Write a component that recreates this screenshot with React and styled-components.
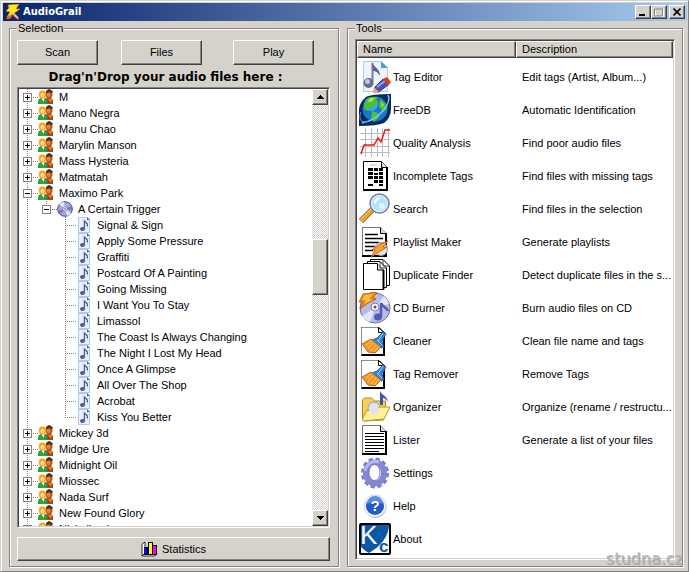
import React from "react";
import styled, { createGlobalStyle, css } from "styled-components";

const face = "#d5d2cb";
const shade = "#848284";
const dark = "#424142";

const GlobalStyle = createGlobalStyle`
  * { box-sizing: border-box; }
  body {
    margin: 0;
    overflow: hidden;
    background: ${face};
    color: #000;
    font: 11px/13px "Liberation Sans", Arial, sans-serif;
  }
  button { font: inherit; color: inherit; padding: 0; margin: 0; }
`;

const raised = css`
  border: 1px solid;
  border-color: #fff ${dark} ${dark} #fff;
  box-shadow: inset -1px -1px 0 ${shade};
  background: ${face};
`;

const sunken = css`
  border: 1px solid;
  border-color: ${shade} #fff #fff ${shade};
  box-shadow: inset 1px 1px 0 ${dark}, inset -1px -1px 0 ${face};
  padding: 1px;
  background: #fff;
`;

const Window = styled.main`
  position: relative;
  display: flex;
  flex-direction: column;
  height: 100vh;
  min-height: 320px;
  border: 1px solid;
  border-color: ${face} ${shade} ${shade} ${face};
  box-shadow: inset 1px 1px 0 #fff;
  padding: 2px 1px 0 2px;
  background: ${face};
`;

const TitleBar = styled.header`
  display: flex;
  align-items: center;
  flex: none;
  height: 18px;
  padding: 0 2px;
  background: linear-gradient(90deg, #0a246a, #a6caf0);
`;

const Title = styled.h1`
  flex: 1;
  margin: 0 0 0 2px;
  color: #fff;
  font: bold 11px/16px "DejaVu Sans Condensed", "DejaVu Sans", sans-serif;
`;

const CaptionButton = styled.button`
  ${raised}
  display: grid;
  place-items: center;
  width: 16px;
  height: 14px;
  margin-left: ${(p) => (p.$apart ? "2px" : "0")};
`;

const Body = styled.div`
  flex: 1;
  min-height: 0;
  display: grid;
  grid-template-columns: minmax(0, 330fr) minmax(0, 336fr);
  gap: 8px;
  padding: 1px 4px 4px 6px;
`;

const Group = styled.fieldset`
  display: flex;
  flex-direction: column;
  min-width: 0;
  min-height: 0;
  margin: 0;
  padding: ${(p) => p.$pad};
  border: 1px solid ${shade};
  box-shadow: 1px 1px 0 #fff, inset 1px 1px 0 #fff;
`;

const Legend = styled.legend`
  padding: 0 1px;
  background: ${face};
`;

const Toolbar = styled.div`
  display: grid;
  grid-template-columns: 104fr 112fr 97fr;
  flex: none;
`;

const PushButton = styled.button`
  ${raised}
  display: flex;
  align-items: center;
  justify-content: center;
  gap: 4px;
  flex: none;
  width: ${(p) => (p.$wide ? "100%" : "81px")};
  height: ${(p) => (p.$wide ? "24px" : "25px")};
`;

const DropHint = styled.p`
  flex: none;
  margin: 6px 16px 3px 0;
  text-align: center;
  white-space: nowrap;
  font: bold 12px/13px "DejaVu Sans", Verdana, sans-serif;
`;

const TreeBox = styled.div`
  ${sunken}
  display: flex;
  flex: 1;
  min-height: 0;
  margin-bottom: 9px;
  overflow: hidden;
`;

const TreeList = styled.ul`
  flex: 1;
  min-width: 0;
  margin: 0;
  padding: 0;
  overflow: hidden;
  list-style: none;
`;

const TreeRow = styled.li`
  display: flex;
  height: 16px;
`;

const dots = "repeating-linear-gradient";
const guides = {
  none: "none",
  line: `${dots}(180deg, ${shade} 0 1px, transparent 1px 2px) 8px 0 / 1px 16px no-repeat`,
  tee: `${dots}(180deg, ${shade} 0 1px, transparent 1px 2px) 8px 0 / 1px 16px no-repeat,
        ${dots}(90deg, ${shade} 0 1px, transparent 1px 2px) 8px 8px / 11px 1px no-repeat`,
  end: `${dots}(180deg, ${shade} 0 1px, transparent 1px 2px) 8px 0 / 1px 9px no-repeat,
        ${dots}(90deg, ${shade} 0 1px, transparent 1px 2px) 8px 8px / 11px 1px no-repeat`,
};

const Guide = styled.span`
  flex: none;
  width: 19px;
  height: 16px;
  padding: 4px;
  background: ${(p) => guides[p.$kind]};
`;

const Toggle = styled.button`
  display: block;
  width: 9px;
  height: 9px;
  border: 1px solid ${shade};
  background:
    linear-gradient(#000, #000) center / 5px 1px no-repeat,
    linear-gradient(#000, #000) center / 1px ${(p) => (p.$open ? "0" : "5px")} no-repeat,
    #fff;
`;

const TreeLabel = styled.span`
  padding: 0 2px 0 5px;
  line-height: 16px;
  white-space: nowrap;
`;

const ScrollBar = styled.div`
  display: flex;
  flex-direction: column;
  flex: none;
  width: 16px;
  background: repeating-conic-gradient(#fff 0 25%, ${face} 0 50%) 0 0 / 2px 2px;
`;

const ScrollButton = styled.button`
  ${raised}
  display: grid;
  place-items: center;
  flex: none;
  width: 16px;
  height: 16px;
`;

const ScrollTrack = styled.div`
  flex: 1;
  display: grid;
  grid-template-rows: 134fr 56fr 215fr;
`;

const ScrollThumb = styled.div`
  ${raised}
  grid-row: 2;
`;

const ListBox = styled.div`
  ${sunken}
  flex: 1;
  min-height: 0;
  overflow: hidden;
`;

const ToolTable = styled.table`
  width: 100%;
  table-layout: fixed;
  border-collapse: separate;
  border-spacing: 0;
`;

const HeadCell = styled.th`
  ${raised}
  width: ${(p) => p.$width};
  height: 17px;
  padding: 0 0 0 5px;
  text-align: left;
  font-weight: normal;
`;

const ToolCell = styled.td`
  height: 33px;
  padding: ${(p) => (p.$text ? "2px 0 0 6px" : "0 0 0 2px")};
  white-space: nowrap;
  overflow: hidden;
`;

const TableBody = styled.tbody`
  &::before {
    content: "";
    display: block;
    height: 2px;
  }
`;

const ToolName = styled.span`
  display: flex;
  align-items: center;
  gap: 2px;
`;

const ToolLabel = styled.span`
  padding-top: 2px;
`;

const Glyph = styled.svg`
  display: block;
  flex: none;
`;

const Watermark = styled.span`
  position: absolute;
  right: 5px;
  bottom: 2px;
  color: #bdbbb7;
  font: 16px/20px "DejaVu Sans", Verdana, sans-serif;
  text-shadow: 1px 1px 0 #a3a19e;
`;

/* ---------- small icons ---------- */

const AppIcon = () => (
  <Glyph width="16" height="16" viewBox="0 0 16 16" aria-hidden="true">
    <path d="M1 15l4-6 3 2-3 4zM9 9l5 5-1 2-5-4z" fill="#e0601c" />
    <path d="M3 1l11-1-3 5 4 0-7 5-6 3 3-5-4-1 3-3z" fill="#ffe81c" stroke="#d98f14" strokeWidth="0.7" />
    <path d="M8 9l5 5" stroke="#d5d5e4" strokeWidth="1.5" />
  </Glyph>
);

const People = () => (
  <Glyph width="16" height="16" viewBox="0 0 16 16" aria-hidden="true">
    <path d="M7 15V11q1-2 3-2h3q2 1 2 3v3z" fill="#a84410" />
    <path d="M10 10l3 4 1-4z" fill="#e88038" />
    <ellipse cx="11" cy="5.500" rx="3.500" ry="4" fill="#bd5614" />
    <ellipse cx="10.500" cy="6" rx="1.800" ry="2" fill="#e58a3c" />
    <path d="M8 3q0-2 3-3 3 1 4 3l-1 1q-3-1.500-6 0z" fill="#34382c" />
    <path d="M0 15v-3q1-3 3-3h4q2 0 2 3v3z" fill="#2fa03a" />
    <path d="M3.500 9h3L5.500 13z" fill="#fff" />
    <ellipse cx="4.500" cy="5.500" rx="3.700" ry="4" fill="#f2a21e" />
    <ellipse cx="4.500" cy="6" rx="2.200" ry="2.500" fill="#ffd479" />
  </Glyph>
);

const Disc = () => (
  <Glyph width="16" height="16" viewBox="0 0 16 16" aria-hidden="true">
    <circle cx="8" cy="8" r="7.3" fill="#a4a6dc" stroke="#454a86" />
    <path d="M8 8L2 3a7 7 0 0 1 5-2zM8 8l6 4a7 7 0 0 1-4 3z" fill="#e4e8fb" />
    <path d="M8 8l7-3v4zM8 8L1 10l2 3z" fill="#7672c0" />
    <circle cx="8" cy="8" r="2.2" fill="#fff" stroke="#6a6ea0" strokeWidth="0.7" />
    <circle cx="8" cy="8" r="0.8" fill="#333a66" />
  </Glyph>
);

const Song = () => (
  <Glyph width="16" height="16" viewBox="0 0 16 16" aria-hidden="true">
    <path d="M2.500 0.500H11L13.500 3V15.500h-11z" fill="#e9f1fb" stroke="#b5c9e6" />
    <path d="M11 0l3 3h-3z" fill="#2a75bd" />
    <ellipse cx="6.500" cy="12" rx="2.500" ry="2" fill="#50579c" />
    <path d="M8.400 12V4l3 3v2.500" fill="none" stroke="#50579c" strokeWidth="1.300" />
  </Glyph>
);

const Chart = () => (
  <Glyph width="17" height="16" viewBox="0 0 17 16" aria-hidden="true">
    <path d="M1 3l3-2v11l-3 3z" fill="#fff" stroke="#000" strokeWidth="0.8" />
    <path d="M1 15l3-3h12l-2 3z" fill="#fff" stroke="#000" strokeWidth="0.8" />
    <g shapeRendering="crispEdges">
      <path d="M3 6h4v8H3zM7 1h5v13H7zM11 4h5v10h-5z" fill="#000" />
      <path d="M3 7h3v6H3z" fill="#0000ff" />
      <path d="M8 2h3v11H8z" fill="#ffff00" />
      <path d="M12 5h3v8h-3z" fill="#ff00ff" />
    </g>
  </Glyph>
);

const Arrow = ({ down }) => (
  <Glyph width="7" height="4" viewBox="0 0 7 4" shapeRendering="crispEdges" aria-hidden="true">
    <path d={down ? "M0 0h7L3.500 4z" : "M0 4h7L3.500 0z"} />
  </Glyph>
);

/* ---------- tool icons ---------- */

const Page = ({ x = 3, stroke = "#000" }) => (
  <>
    <path d={`M${x + 0.5} 1.500H${x + 18.5}L${x + 24.5} 7.500V30.500H${x + 0.5}z`} fill="#fff" stroke={stroke} />
    <path d={`M${x + 18.5} 1.500V7.500H${x + 24.5}`} fill="#dcdcdc" stroke="#000" />
    <path d={`M${x + 24} 7V30H${x}`} fill="none" stroke="#000" strokeWidth="2" />
  </>
);

const Broom = () => (
  <>
    <path d="M2.500 2.500H20L25.500 8V30.500h-23z" fill="#fff" stroke="#000" />
    <path d="M2.500 30V2.500H19" fill="none" stroke="#8c8c94" />
    <path d="M19.500 2.500V7.500h5.500z" fill="#fff" stroke="#000" />
    <path d="M25 7v23H3" fill="none" stroke="#000" strokeWidth="2" />
    <path d="M24 7l3 2-4 7 2 6-3 1-9-8 5-2z" fill="#2f86dc" stroke="#1a4f9c" strokeWidth="0.8" />
    <path d="M24 8l-5 8M18 15l5 5" stroke="#8fd0fa" />
    <path d="M12 14l10 8-6 6-7-1-6-8z" fill="#f29a2c" stroke="#b96810" />
    <path d="M12 16l-5 4M14 18l-5 5M17 20l-5 6M19 22l-4 5" stroke="#ffc468" />
  </>
);

const drawings = {
  tag: (
    <>
      <path d="M4.500 0.500H22L28.500 7V30.500h-24z" fill="#edf4fc" stroke="#b3cbe8" />
      <path d="M22 0l7 7h-7z" fill="#4b9fdd" />
      <path d="M13.500 2v19" stroke="#7a7fa8" strokeWidth="2" />
      <path d="M13 1c2 6 8 6 8 14-2-4-5-5-7-5z" fill="#5b6190" />
      <ellipse cx="9.500" cy="22" rx="5" ry="5" fill="#666b92" />
      <ellipse cx="8.500" cy="20.500" rx="2.500" ry="2.500" fill="#c4c8de" />
      <path d="M24 18l5 6-9 7-5 0 1-5z" fill="#4a50b4" stroke="#262a70" strokeWidth="0.8" />
      <path d="M18 26l8-6" stroke="#98a0f0" strokeWidth="2" />
      <path d="M28 16l4 5-3 4-5-7z" fill="#d8401c" />
      <path d="M15 26l5 5-6 1z" fill="#f0a860" />
    </>
  ),
  globe: (
    <>
      <path d="M7 3Q12 0 32 0v14q0 10-7 15Q18 32 0 32V15Q1 8 7 3z" fill="#082a62" />
      <circle cx="16" cy="15" r="12.500" fill="#1679cf" />
      <circle cx="12" cy="10" r="7" fill="#4fb4f2" opacity="0.7" />
      <path d="M6 8l5-5 8 0-2 3 2 3-5 4-2-1-3 5-4-2zM13 17l6 2 1 4-5 5-3-4zM21 5l5 4 2 6-4 3-4-6z" fill="#4fc02c" />
      <path d="M8 7l4-3 4 0-4 4zM22 8l3 3-2 2z" fill="#a5e84a" />
      <path d="M29 1c4 7-8 25-26 28" fill="none" stroke="#7cc4ee" strokeWidth="1.500" />
      <path d="M2 18c-3 7 0 12 7 9" fill="none" stroke="#4c98d8" />
    </>
  ),
  quality: (
    <>
      <path d="M6.500 1v29M12.500 1v29M18.500 1v29M23.500 1v29M29.500 1v29M1 6.500h30M1 12.500h30M1 19.500h30M1 25.500h30" stroke="#bbb" />
      <path d="M2 27l3-9h10l4-7 3 4 4-12h5" fill="none" stroke="#f41414" strokeWidth="1.500" />
    </>
  ),
  incomplete: (
    <>
      <Page x={4} />
      <path d="M11 5h7" stroke="#bbb" />
      <g fill="#000" shapeRendering="crispEdges">
        <path d="M9 8h5v3H9zM15 8h4v3h-4zM20 8h4v3h-4zM9 12h5v3H9zM20 12h4v3h-4zM9 16h5v3H9zM15 16h4v3h-4zM20 16h4v3h-4zM15 20h4v3h-4zM20 20h4v3h-4zM9 24h5v2H9zM20 24h4v2h-4zM15 13h4v2h-4z" />
      </g>
    </>
  ),
  search: (
    <>
      <path d="M13 17L2 28" stroke="#a85e14" strokeWidth="6" />
      <path d="M13 17L2 28" stroke="#f2a033" strokeWidth="4" />
      <path d="M12 16L2 26" stroke="#ffd27c" />
      <circle cx="20.500" cy="10.500" r="9.500" fill="#b9e2f8" stroke="#7380aa" strokeWidth="1.500" />
      <circle cx="20.500" cy="10.500" r="8" fill="none" stroke="#e6f2fc" />
      <path d="M15 10c0-4 4-6 7-5-3 1-5 3-5 6z" fill="#fff" />
      <circle cx="23" cy="13" r="3" fill="#dff4ff" />
    </>
  ),
  playlist: (
    <>
      <Page stroke="#777" />
      <path d="M6 8.500h13M6 12.500h18M6 16.500h14M6 20.500h10M6 24.500h8" stroke="#000" strokeWidth="1.500" />
      <circle cx="22" cy="23" r="6.500" fill="#e4e4e8" stroke="#999" />
      <path d="M29 15l-5 6 4 0-8 5-8 5 4-7-3 0 8-6z" fill="#fba02c" stroke="#b8520c" strokeWidth="0.8" />
    </>
  ),
  duplicate: (
    <>
      <path d="M11.500 0.500H24L30.500 7V26.500h-19z" fill="#fff" stroke="#000" />
      <path d="M8.500 2.500H21L27.500 9V28.500h-19z" fill="#fff" stroke="#000" />
      <path d="M4.500 4.500H18L24.500 11V30.500h-20z" fill="#fff" stroke="#000" />
      <path d="M18.500 4.500V11h6" fill="#ddd" stroke="#000" />
      <path d="M21 3v6h6M24 1v6h6" fill="none" stroke="#444" />
      <path d="M24.500 11V30.500" stroke="#000" strokeWidth="2" />
    </>
  ),
  burner: (
    <>
      <circle cx="16" cy="16" r="15" fill="#b7bce8" stroke="#6a6f9e" />
      <path d="M16 16L3 24a15 15 0 0 0 8 6zM16 16L25 4a15 15 0 0 1 5 8z" fill="#e1e6fc" />
      <circle cx="16" cy="15" r="4" fill="#f5f6ff" stroke="#777ca8" />
      <circle cx="16" cy="15" r="1.500" fill="#555" />
      <ellipse cx="19" cy="25" rx="4" ry="3.500" fill="#5058b8" />
      <path d="M22 25V11c1 4 6 4 7 8" fill="none" stroke="#5058b8" strokeWidth="2.500" />
      <path d="M4 2l14-2-4 6 3 1-8 4-8 6 3-7-4 0z" fill="#f58a16" stroke="#b8520c" strokeWidth="0.8" />
      <path d="M6 3l8-1-4 5 3 1-8 4 2-4-4 0z" fill="#ffc23c" />
    </>
  ),
  broom: <Broom />,
  organizer: (
    <>
      <path d="M3.500 28V9l2-2h7l3 3h11v5l-2 14-19 1z" fill="#f5cf58" stroke="#b8860e" />
      <circle cx="15" cy="17" r="6" fill="#dfe0f4" stroke="#9a9cc0" />
      <path d="M3 29l5-10 8 2 4-5h11l-6 12-20 2z" fill="#fff09a" stroke="#c4951c" />
      <circle cx="15" cy="19" r="5" fill="#e4e4f0" opacity="0.9" />
      <path d="M21 14V0c2 5 7 4 8 11-2-3-4-4-5-4v7z" fill="#4c52a6" />
    </>
  ),
  lister: (
    <>
      <Page stroke="#777" />
      <path d="M6 9.500h19M6 12.500h19M6 15.500h19M6 18.500h19M6 21.500h19M6 24.500h19M6 27.500h14" stroke="#000" />
    </>
  ),
  settings: (
    <>
      <ellipse cx="16" cy="16" rx="12" ry="13.500" fill="none" stroke="#7a7cca" strokeWidth="4" strokeDasharray="4 2.700" />
      <ellipse cx="16" cy="16" rx="9" ry="10.500" fill="none" stroke="#8486d6" strokeWidth="6" />
      <path d="M6 14C8 6 14 3 20 5" fill="none" stroke="#b4b6f2" strokeWidth="3" />
      <ellipse cx="15.500" cy="15.500" rx="5.500" ry="8" fill="#fff" stroke="#6062ac" strokeWidth="0.8" />
    </>
  ),
  help: (
    <>
      <circle cx="16.500" cy="17" r="11" fill="#bbbfc8" />
      <circle cx="16" cy="16" r="11" fill="#f5f7fb" stroke="#d3d8e4" />
      <circle cx="16" cy="16" r="9" fill="#2459c8" />
      <path d="M8 14a8 8 0 0 1 16 0q-8-4-16 0z" fill="#5a8de8" />
      <text x="16" y="21" textAnchor="middle" fill="#fff" fontFamily="Liberation Sans" fontWeight="bold" fontSize="15">?</text>
    </>
  ),
  about: (
    <>
      <rect x="1" y="1" width="30" height="30" rx="1" fill="#0b58a8" stroke="#000" strokeWidth="2" />
      <path d="M30 3c-1 11-8 20-20 27h20z" fill="#fff" />
      <path d="M2 30v-6q4 4 8 6z" fill="#fff" />
      <text x="1" y="21" fill="#fff" fontFamily="Liberation Sans" fontSize="26">K</text>
      <text x="20" y="29" fill="#0b58a8" fontFamily="Liberation Sans" fontWeight="bold" fontSize="17">c</text>
    </>
  ),
};

const ToolIcon = ({ name }) => (
  <Glyph width="32" height="32" viewBox="0 0 32 32" aria-hidden="true">
    {drawings[name]}
  </Glyph>
);

/* ---------- data ---------- */

const songs = [
  "Signal & Sign", "Apply Some Pressure", "Graffiti", "Postcard Of A Painting",
  "Going Missing", "I Want You To Stay", "Limassol", "The Coast Is Always Changing",
  "The Night I Lost My Head", "Once A Glimpse", "All Over The Shop", "Acrobat", "Kiss You Better",
];
const artist = (label, open = false) => ({ label, level: 0, open, guides: ["tee"] });

const tree = [
  ...["M", "Mano Negra", "Manu Chao", "Marylin Manson", "Mass Hysteria", "Matmatah"].map((n) => artist(n)),
  artist("Maximo Park", true),
  { label: "A Certain Trigger", level: 1, open: true, guides: ["line", "end"] },
  ...songs.map((label, i) => ({
    label,
    level: 2,
    guides: ["line", "none", i === songs.length - 1 ? "end" : "tee"],
  })),
  ...["Mickey 3d", "Midge Ure", "Midnight Oil", "Miossec", "Nada Surf", "New Found Glory", "Nickelback"].map((n) => artist(n)),
];
const treeIcons = [People, Disc, Song];

const tools = [
  ["tag", "Tag Editor", "Edit tags (Artist, Album...)"],
  ["globe", "FreeDB", "Automatic Identification"],
  ["quality", "Quality Analysis", "Find poor audio files"],
  ["incomplete", "Incomplete Tags", "Find files with missing tags"],
  ["search", "Search", "Find files in the selection"],
  ["playlist", "Playlist Maker", "Generate playlists"],
  ["duplicate", "Duplicate Finder", "Detect duplicate files in the s..."],
  ["burner", "CD Burner", "Burn audio files on CD"],
  ["broom", "Cleaner", "Clean file name and tags"],
  ["broom", "Tag Remover", "Remove Tags"],
  ["organizer", "Organizer", "Organize (rename / restructu..."],
  ["lister", "Lister", "Generate a list of your files"],
  ["settings", "Settings", ""],
  ["help", "Help", ""],
  ["about", "About", ""],
];

const TreeNode = ({ node }) => {
  const Icon = treeIcons[node.level];
  return (
    <TreeRow role="treeitem" aria-level={node.level + 1} aria-expanded={node.level < 2 ? node.open : undefined}>
      {node.guides.map((kind, i) => (
        <Guide key={i} $kind={kind}>
          {i === node.level && node.level < 2 && (
            <Toggle $open={node.open} aria-label={`${node.open ? "Collapse" : "Expand"} ${node.label}`} />
          )}
        </Guide>
      ))}
      <Icon />
      <TreeLabel>{node.label}</TreeLabel>
    </TreeRow>
  );
};

export default function App() {
  return (
    <>
      <GlobalStyle />
      <Window>
        <TitleBar>
          <AppIcon />
          <Title>AudioGrail</Title>
          <CaptionButton aria-label="Minimize">
            <Glyph width="10" height="8"><path d="M1 6h6v2H1z" /></Glyph>
          </CaptionButton>
          <CaptionButton aria-label="Maximize" disabled>
            <Glyph width="10" height="9">
              <path d="M1.500 1v7.500h8V1" fill="none" stroke="#fff" />
              <path d="M0.500 1h8v7h-8z" fill="none" stroke={shade} />
            </Glyph>
          </CaptionButton>
          <CaptionButton aria-label="Close" $apart>
            <Glyph width="8" height="8"><path d="M0.500 0.500l7 7M7.500 0.500l-7 7" stroke="#000" strokeWidth="1.600" /></Glyph>
          </CaptionButton>
        </TitleBar>
        <Body>
          <Group $pad="5px 8px 5px 7px">
            <Legend>Selection</Legend>
            <Toolbar>
              <PushButton>Scan</PushButton>
              <PushButton>Files</PushButton>
              <PushButton>Play</PushButton>
            </Toolbar>
            <DropHint>Drag'n'Drop your audio files here :</DropHint>
            <TreeBox>
              <TreeList role="tree" aria-label="Audio files">
                {tree.map((node) => <TreeNode key={node.label} node={node} />)}
              </TreeList>
              <ScrollBar>
                <ScrollButton aria-label="Scroll up"><Arrow /></ScrollButton>
                <ScrollTrack><ScrollThumb /></ScrollTrack>
                <ScrollButton aria-label="Scroll down"><Arrow down /></ScrollButton>
              </ScrollBar>
            </TreeBox>
            <PushButton $wide><Chart />Statistics</PushButton>
          </Group>
          <Group $pad="4px 7px 6px">
            <Legend>Tools</Legend>
            <ListBox>
              <ToolTable>
                <thead>
                  <tr>
                    <HeadCell $width="159px">Name</HeadCell>
                    <HeadCell>Description</HeadCell>
                  </tr>
                </thead>
                <TableBody>
                  {tools.map(([icon, name, description]) => (
                    <tr key={name}>
                      <ToolCell>
                        <ToolName><ToolIcon name={icon} /><ToolLabel>{name}</ToolLabel></ToolName>
                      </ToolCell>
                      <ToolCell $text>{description}</ToolCell>
                    </tr>
                  ))}
                </TableBody>
              </ToolTable>
            </ListBox>
          </Group>
        </Body>
        <Watermark>studna.cz</Watermark>
      </Window>
    </>
  );
}
